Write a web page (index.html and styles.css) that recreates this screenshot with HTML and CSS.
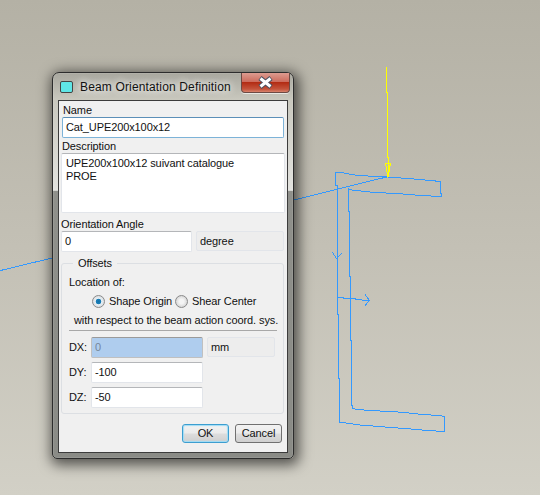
FILE: index.html
```html
<!DOCTYPE html>
<html>
	<head>
		<meta charset="utf-8" />
		<title>Beam Orientation Definition</title>
		<link rel="stylesheet" href="styles.css">
	</head>
	<body>
<!-- the model behind the dialog -->
<svg class="model" width="540" height="495" viewBox="0 0 540 495">
    <g class="blue">
        <polyline points="0.5,270.5 50,258.5 296,199.5 388.5,176.5" />
        <polyline points="335.5,185.5 335.5,172.5 341,172.5 355,175 375,176.5 388,177 420,179.5 440.5,181.5 440.5,193.5 441.5,193.5 441.5,196.5 421,195.5 397,193.5 375,192.5 352,190 349,189 348.5,188.5 348.5,211.5 349.5,211.5 349.5,276.5 350.5,276.5 350.5,340.5 351.5,340.5 351.5,405.5 352.5,405.5 352.5,408.5 357,409.5 370,410.5 390,411.5 405,412.5 422,414.5 440,415.5 444.5,416.5 444.5,431.5 428,430.5 405,428.5 385,427 360,425 346,423 339.5,422.5 339.5,378.5 338.5,378.5 338.5,314.5 337.5,314.5 337.5,185.5 335.5,185.5" />
        <polyline points="337.5,297.5 343,297.5 343,298.5 355,298.5 355,299.5 369,300.5" />
        <polyline points="365,294.5 369.5,300.5 365,305.5" />
        <polyline points="332.5,252.5 336.5,258.5 341.5,253.5" />
    </g>
    <g class="yellow">
        <polyline points="386.5,67 386.5,92 387.5,92 387.5,157 388.5,157 388.5,177" />
        <polyline points="388,177 385.5,163.5 390.5,163.5 388,177" />
        <line x1="388" y1="165" x2="388" y2="176" />
        <line x1="389" y1="165" x2="389" y2="172" />
    </g>
</svg>

<div class="window">
    <div class="titlebar">
        <span class="app-icon"></span>
        <span class="title">Beam Orientation Definition</span>
        <span class="close">
            <svg width="17" height="13" viewBox="0 0 17 13">
                <path d="M3 2 L14 11 M14 2 L3 11" stroke="#4a5060" stroke-width="5" />
                <path d="M3.5 2.5 L13.5 10.5 M13.5 2.5 L3.5 10.5" stroke="#fff" stroke-width="3" />
            </svg>
        </span>
    </div>
    <div class="panel">
        <label class="cap">Name</label>
        <div class="field field-focus name-field">Cat_UPE200x100x12</div>
        <label class="cap cap-desc">Description</label>
        <div class="field desc-field">UPE200x100x12 suivant catalogue<br>PROE</div>
        <label class="cap cap-angle">Orientation Angle</label>
        <div class="angle-row">
            <div class="field angle-field">0</div>
            <div class="unit unit-degree">degree</div>
        </div>
        <fieldset class="group">
            <legend>Offsets</legend>
            <div class="loc-label">Location of:</div>
            <div class="radios">
                <span class="radio radio-on"></span><span class="radio-text">Shape Origin</span>
                <span class="radio"></span><span class="radio-text">Shear Center</span>
            </div>
            <div class="respect">with respect to the beam action coord. sys.</div>
            <div class="divider"></div>
            <div class="offset-row">
                <span class="off-label">DX:</span>
                <div class="field off-field off-selected">0</div>
                <div class="unit unit-mm">mm</div>
            </div>
            <div class="offset-row">
                <span class="off-label">DY:</span>
                <div class="field off-field">-100</div>
            </div>
            <div class="offset-row">
                <span class="off-label">DZ:</span>
                <div class="field off-field">-50</div>
            </div>
        </fieldset>
        <div class="buttons">
            <div class="btn btn-default">OK</div>
            <div class="btn">Cancel</div>
        </div>
    </div>
</div>
	</body>
</html>
```

FILE: styles.css
```css
* {
    box-sizing: border-box;
}
html, body {
    margin: 0;
    padding: 0;
}
body {
    position: relative;
    width: 540px;
    height: 495px;
    overflow: hidden;
    background: linear-gradient(#b4b1a5, #c3c0b5 50%, #d2d0c6);
    font-family: "Liberation Sans", Arial, sans-serif;
    font-size: 11px;
    letter-spacing: -0.1px;
    color: #111;
}
.model {
    position: absolute;
    left: 0;
    top: 0;
}
.model polyline, .model line {
    fill: none;
    stroke-width: 1;
    shape-rendering: crispEdges;
}
.blue polyline {
    stroke: #3399ff;
}
.yellow polyline, .yellow line {
    stroke: #ffff00;
}

/* window on the desktop */
.window {
    position: absolute;
    left: 52px;
    top: 72px;
    width: 242px;
    height: 387px;
    padding: 0 5px 5px;
    border: 1px solid #2c2c2c;
    border-radius: 7px 7px 5px 5px;
    background: linear-gradient(#a9a89f 0, #c9c8be 7%, #e2e2de 30%, #e6e6e3 30.5%, #8f908b 30.6%, #8a8b86 100%);
    box-shadow: 0 0 0 1px rgba(255,255,255,.1) inset, 2px 3px 13px 3px rgba(0,0,0,.6);
}
.titlebar {
    display: flex;
    align-items: flex-start;
    height: 27px;
    padding: 8px 0 0 2px;
}
.app-icon {
    width: 13px;
    height: 12px;
    border: 1px solid #444;
    border-radius: 2px;
    background: #5fe6e6;
}
.title {
    margin: -1px 0 0 7px;
    font-size: 12px;
    letter-spacing: 0.15px;
    line-height: 15px;
    color: #111;
    text-shadow: 0 0 6px #fff, 0 0 8px #eee;
}
.close {
    display: flex;
    align-items: center;
    justify-content: center;
    width: 49px;
    height: 20px;
    margin: -8px -2px 0 auto;
    border: 1px solid #6d4a44;
    border-top: 0;
    border-radius: 0 0 4px 4px;
    background: linear-gradient(#dd9c90, #cd6d5e 45%, #b32c14 50%, #c4543c 85%, #d8836d);
    box-shadow: 0 1px 0 #e8e8e4;
}
.panel {
    display: flex;
    flex-direction: column;
    height: 353px;
    padding: 0 3px;
    border: 1px solid #3c3c3c;
    background: #f0f0f0;
}
.cap {
    display: block;
    margin-left: 1px;
    line-height: 14px;
}
.cap:first-child {
    margin-top: 3px;
    line-height: 13px;
}
.cap-desc {
    margin: 1px 0 0;
}
.cap-angle {
    margin: 4px 0 0 -1px;
}
.field {
    padding: 0 3px;
    background: #fff;
    border: 1px solid #e2e5ea;
    border-top-color: #b4b6b9;
    border-radius: 2px;
    line-height: 19px;
}
.field-focus {
    border-color: #7db3d8;
    border-top-color: #5b8fb8;
}
.name-field {
    height: 21px;
}
.desc-field {
    height: 60px;
    margin: 0 -1px;
    padding: 3px 4px;
    line-height: 13px;
}
.angle-row {
    display: flex;
    gap: 4px;
    margin: 0 -1px;
}
.angle-field {
    width: 131px;
    height: 21px;
}
.unit {
    height: 20px;
    padding: 0 3px;
    border: 1px solid #e2e5ea;
    border-radius: 2px;
    background: #ededed;
    line-height: 18px;
}
.unit-degree {
    width: 88px;
}
.unit-mm {
    width: 68px;
    margin-left: 4px;
}
.group {
    width: 223px;
    height: 158px;
    margin: 4px 0 0 -1px;
    padding: 0 7px;
    border: 1px solid #dcdfe3;
    border-radius: 3px;
    min-width: 0;
}
.group legend {
    margin-left: 4px;
    padding: 0 5px;
    line-height: 14px;
}
.loc-label {
    margin-top: 5px;
    line-height: 14px;
}
.radios {
    display: flex;
    align-items: center;
    height: 16px;
    margin: 4px 0 0 23px;
}
.radio {
    flex: none;
    width: 13px;
    height: 13px;
    border: 1px solid #8a8a8a;
    border-radius: 50%;
    background: radial-gradient(circle, #f4f4f4 30%, #c4c4c4 100%);
}
.radio-on {
    background: radial-gradient(circle, #1273ab 0, #1a7fb8 32%, #e8eef2 40%, #cfd4d8 100%);
}
.radio-text {
    flex: none;
    width: 66px;
    margin-left: 4px;
    white-space: nowrap;
}
.respect {
    margin: 4px 0 0 5px;
    line-height: 14px;
    white-space: nowrap;
}
.divider {
    height: 1px;
    margin-top: 3px;
    width: 208px;
    background: #a8a8a8;
}
.offset-row {
    display: flex;
    align-items: flex-start;
    height: 25px;
}
.divider + .offset-row {
    margin-top: 6px;
}
.off-label {
    width: 22px;
    line-height: 20px;
}
.off-field {
    width: 112px;
    height: 21px;
}
.off-selected {
    background: #afcdee;
    border-color: #c0c0c0;
    border-top-color: #9a9a9a;
    color: #75869a;
}
.buttons {
    display: flex;
    justify-content: flex-end;
    gap: 6px;
    margin: 10px 2px 0 0;
}
.btn {
    width: 47px;
    height: 19px;
    border: 1px solid #707070;
    border-radius: 3px;
    background: linear-gradient(#f2f2f2, #ebebeb 48%, #dddddd 52%, #cfcfcf);
    text-align: center;
    line-height: 17px;
}
.btn-default {
    border-color: #3c9ed0;
    box-shadow: inset 0 0 1px 1px #9fdcf5;
}
```
